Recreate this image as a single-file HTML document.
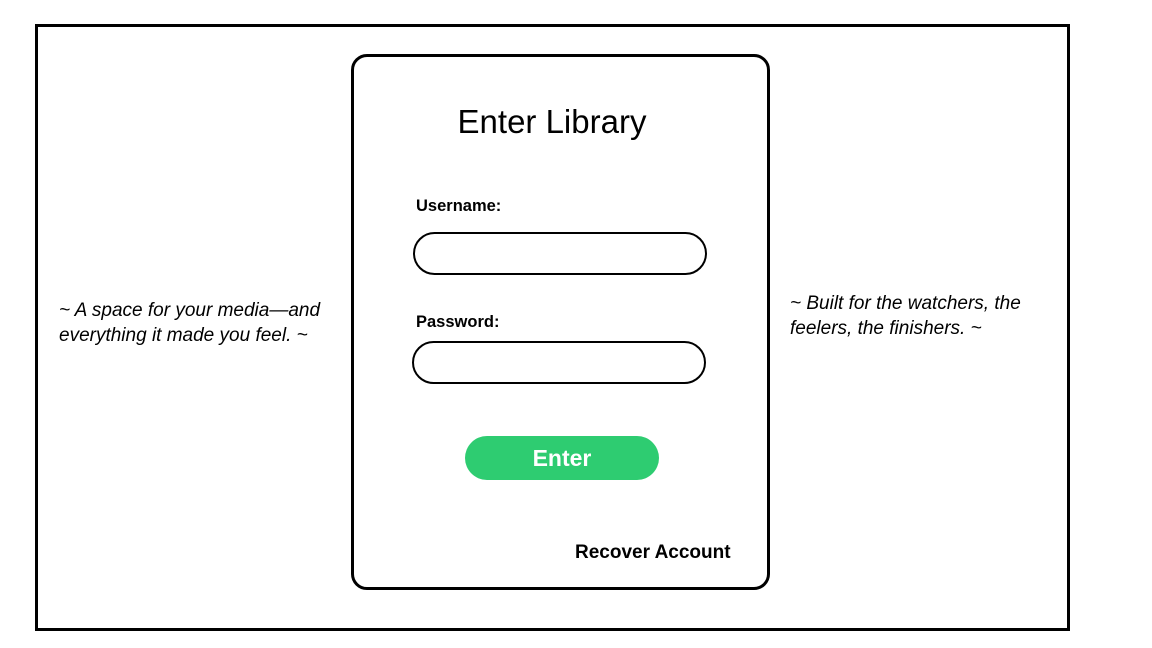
<!DOCTYPE html>
<html><head><style>
body{margin:0;width:1152px;height:648px;background:#fff;position:relative;font-family:"Liberation Sans",sans-serif;overflow:hidden}
.a{position:absolute}
.outer{left:35px;top:24px;width:1029px;height:601px;border:3px solid #000}
.card{left:351px;top:54px;width:413px;height:530px;border:3px solid #000;border-radius:16px}
.title{left:352px;width:400px;text-align:center;top:102px;font-size:33px;line-height:40px}
.lbl{font-weight:bold;font-size:16.5px;line-height:20px}
.inp{width:290px;height:39px;border:2px solid #000;border-radius:22px}
.btn{left:465px;top:436px;width:194px;height:44px;background:#2ecc71;border-radius:22px;color:#fff;font-size:23px;font-weight:bold;line-height:44px;text-align:center}
.side{font-style:italic;font-size:19px;line-height:25px}
</style></head><body>
<div class="a outer"></div>
<div class="a card"></div>
<div class="a title">Enter Library</div>
<div class="a lbl" style="left:416px;top:196px">Username:</div>
<div class="a inp" style="left:413px;top:232px"></div>
<div class="a lbl" style="left:416px;top:312px">Password:</div>
<div class="a inp" style="left:412px;top:341px"></div>
<div class="a btn">Enter</div>
<div class="a" style="left:575px;top:542px;font-size:19px;font-weight:bold;line-height:22px">Recover Account</div>
<div class="a side" style="left:59px;top:298px">~ A space for your media—and<br>everything it made you feel. ~</div>
<div class="a side" style="left:790px;top:291px">~ Built for the watchers, the<br>feelers, the finishers. ~</div>
</body></html>
